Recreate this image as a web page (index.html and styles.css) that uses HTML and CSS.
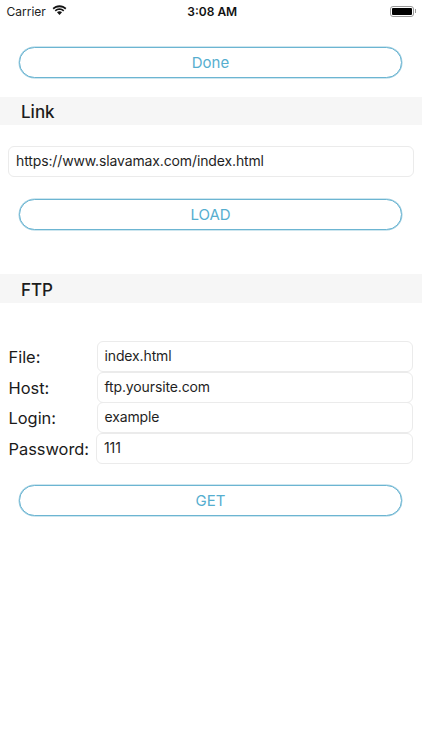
FILE: index.html
```html
<!DOCTYPE html>
<html lang="en">
<head>
<meta charset="utf-8">
<title>Link and FTP</title>
<link rel="stylesheet" href="styles.css">
</head>
<body>
<div class="screen">
  <header class="status">
    <div class="status-left">
      <span class="carrier">Carrier</span>
      <svg class="wifi" width="15" height="11" viewBox="0 0 15 11"><path d="M7.5 2.2c2.2 0 4.200.8 5.700 2.200l1.200-1.300C12.600 1.300 10.200.2 7.500.2S2.400 1.300.6 3.100l1.200 1.300C3.300 3 5.300 2.200 7.500 2.200z" fill="#111"/><path d="M7.500 5.100c1.400 0 2.600.5 3.600 1.400l1.200-1.300C11 4 9.300 3.200 7.500 3.200S4 4 2.700 5.200l1.200 1.300c1-.9 2.200-1.400 3.600-1.400z" fill="#111"/><path d="M7.500 6.300c-1 0-1.900.4-2.500 1L7.500 10l2.500-2.700c-.6-.6-1.500-1-2.500-1z" fill="#111"/></svg>
    </div>
    <span class="clock">3:08 AM</span>
    <div class="battery"><span class="battery-body"><span class="battery-fill"></span></span><span class="battery-tip"></span></div>
  </header>

  <div class="pad done-wrap"><button class="btn">Done</button></div>

  <h2 class="band">Link</h2>
  <div class="link-row"><div class="field">https://www.slavamax.com/index.html</div></div>
  <div class="pad load-wrap"><button class="btn">LOAD</button></div>

  <h2 class="band ftp-band">FTP</h2>
  <div class="form">
    <label class="lbl">File:</label><div class="field">index.html</div>
    <label class="lbl">Host:</label><div class="field">ftp.yoursite.com</div>
    <label class="lbl">Login:</label><div class="field">example</div>
    <label class="lbl">Password:</label><div class="field pw">111</div>
  </div>
  <div class="pad get-wrap"><button class="btn">GET</button></div>
</div>
</body>
</html>
```
FILE: styles.css
```css
* { box-sizing: border-box; }
html, body { margin: 0; padding: 0; background: #fff; }
body { font-family: Inter, "Liberation Sans", sans-serif; color: #1a1a1a; }
.screen { width: 422px; height: 750px; overflow: hidden; }

.status { height: 22px; display: grid; grid-template-columns: 1fr auto 1fr; align-items: center; padding: 0 6px 0 6.500px; }
.status-left { display: flex; align-items: center; gap: 6px; }
.carrier { font-size: 12px; color: #222; }
.wifi { display: block; margin-top: -2px; }
.clock { font-size: 12px; font-weight: 600; color: #111; margin-left: 2px; }
.battery { justify-self: end; display: flex; align-items: center; }
.battery-body { width: 24px; height: 11px; border: 1px solid #999; border-radius: 3px; padding: 1px; display: block; }
.battery-fill { display: block; height: 100%; background: #000; border-radius: 1px; }
.battery-tip { width: 1px; height: 4px; background: #999; margin-left: 1px; }

.pad { padding: 0 20px 0 19px; }
.done-wrap { padding-top: 25px; }
.load-wrap { padding-top: 22px; }
.get-wrap { padding-top: 22px; }
.btn { display: block; width: 100%; height: 31px; border: 1px solid #6cb5d2; border-radius: 15.5px; box-shadow: 0 0 0 0.5px #9ccde0; background: #fff; color: #56aecf; font: 400 15px Inter, "Liberation Sans", sans-serif; padding: 0; }

.band { margin: 19px 0 0; height: 28px; background: #f6f6f6; padding-left: 21px; font-size: 17px; line-height: 30px; font-weight: 500; color: #1c1c1c; }
.ftp-band { margin-top: 44px; height: 29px; line-height: 32px; }

.link-row { padding: 21px 8px 0; }
.field { height: 31px; border: 1px solid #ebebeb; border-radius: 6px; background: #fff; padding-left: 7px; font-size: 14px; letter-spacing: -0.13px; line-height: 27px; color: #1f1f1f; }

.form { margin-top: 38px; padding: 0 9px 0 8.500px; display: grid; grid-template-columns: 88px 1fr; grid-auto-rows: 30.500px; }
.lbl { font-size: 16.400px; line-height: 32px; color: #1a1a1a; }
.pw { margin-left: -0.500px; }
```
